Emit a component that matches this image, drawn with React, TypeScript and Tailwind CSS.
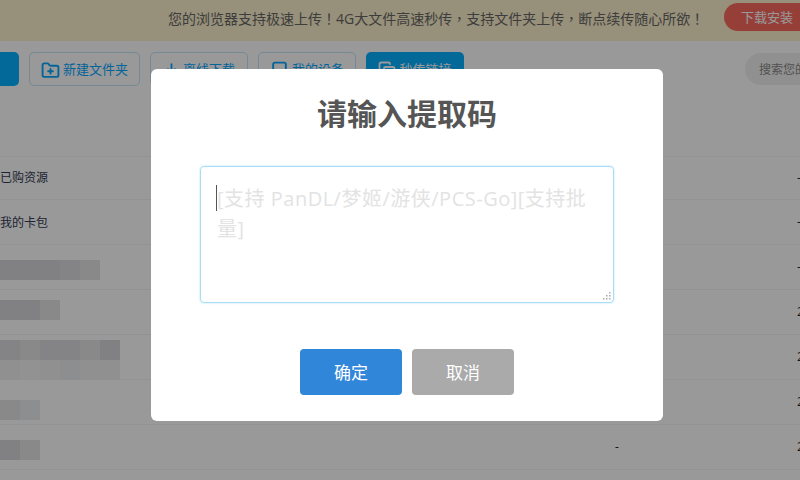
import type { ReactNode } from "react";
import { Download, Copy, Tablet, FolderPlus } from "lucide-react";

const font = "font-['Open_Sans','Noto_Sans_CJK_SC',sans-serif]";

const outline = "h-[34px] flex items-center justify-center gap-[3px] rounded-[5px] border border-[#c3e3f5] text-[13px] text-[#06a7ff]";

function P({ children }: { children: ReactNode }) {
  return <span className="font-['Noto_Sans_CJK_TC',sans-serif]">{children}</span>;
}

function Mosaic({ cells }: { cells: string[] }) {
  return (
    <div className="flex h-5">
      {cells.map((c, i) => (
        <div key={i} className="w-5 h-5" style={{ backgroundColor: c }} />
      ))}
    </div>
  );
}

function Row({ children, right, mid, h = "h-[45px]", pad = "" }: { children?: ReactNode; right: string; mid?: string; h?: string; pad?: string }) {
  return (
    <div className={`${h} shrink-0 border-b border-[#f4f4f8] flex items-center relative`}>
      <div className={`flex-1 min-w-0 text-xs text-[#333c55] ${pad}`}>{children}</div>
      {mid && <span className="absolute left-[615px] text-xs text-[#222]">{mid}</span>}
      <span className="absolute left-[797px] text-xs text-[#222]">{right}</span>
    </div>
  );
}

export default function App() {
  const a = "#d8d8da", b = "#dddddf", c = "#e5e5e7", d = "#ecedee", e = "#f0f0f1", f = "#f3f3f4";
  return (
    <div className={`relative w-[800px] h-[480px] overflow-hidden bg-white ${font}`}>
      <div className="h-[41px] bg-[#fcf0cb] flex items-start pl-[168px]">
        <span className="shrink-0 text-sm leading-[37px] text-[#666] whitespace-nowrap w-[556px]">
          您的浏览器支持极速上传<P>！</P>4G大文件高速秒传<P>，</P>支持文件夹上传<P>，</P>断点续传随心所欲<P>！</P>
        </span>
        <span className="shrink-0 mt-[3px] w-[96px] h-[28px] rounded-full bg-[#fa6a60] text-white text-[13px] leading-[28px] pl-[17px] whitespace-nowrap">下载安装</span>
      </div>
      <div className="h-[116px] border-b border-[#f4f4f8] flex items-start pt-[11px] gap-[10px] pl-[29px] relative">
        <div className="absolute left-0 top-[11px] w-[19px] h-[34px] rounded-r-[5px] bg-[#06b0ff]" />
        <div className={`${outline} w-[111px] pt-[2px]`}><FolderPlus size={19} strokeWidth={2.4} />新建文件夹</div>
        <div className={`${outline} w-[98px] pt-[2px]`}><Download size={17} strokeWidth={2.4} />离线下载</div>
        <div className={`${outline} w-[98px] pt-[2px]`}><Tablet size={19} strokeWidth={2.4} />我的设备</div>
        <div className="h-[34px] w-[98px] pt-[2px] flex items-center justify-center gap-[3px] rounded-[5px] bg-[#06b0ff] text-[13px] text-white"><Copy size={18} strokeWidth={2.4} />秒传链接</div>
        <div className="ml-auto mt-px w-[120px] mr-[-65px] h-[32px] rounded-full bg-[#f0f0f0] text-[12px] leading-[33px] pl-[14px] text-[#888] whitespace-nowrap">搜索您的文件</div>
      </div>
      <div className="flex flex-col">
        <Row right="-" h="h-[43px]">已购资源</Row>
        <Row right="-" pad="pt-[2px]">我的卡包</Row>
        <Row right="-" pad="self-start pt-[15px]"><Mosaic cells={[a, a, a, b, c]} /></Row>
        <Row right="2" pad="self-start pt-[10px]"><Mosaic cells={[a, a, c]} /></Row>
        <Row right="2" pad="self-start pt-[5px]">
          <Mosaic cells={[b, c, b, b, c, a]} />
          <Mosaic cells={[e, f, e, d, e, e]} />
        </Row>
        <Row right="2" pad="self-start pt-[20px]"><Mosaic cells={[c, d]} /></Row>
        <Row right="2" mid="-" pad="self-start pt-[15px]"><Mosaic cells={[a, c]} /></Row>
      </div>

      <div className="absolute inset-0 bg-black/40" />

      <div className="absolute left-[151px] top-[69px] w-[512px] h-[352px] rounded-[6px] bg-white flex flex-col items-center">
        <h1 className="mt-[22px] h-[45px] text-[30px] leading-[45px] font-bold text-[#555]">请输入提取码</h1>
        <div className="relative mt-[30px]">
          <textarea
            readOnly
            placeholder="[支持 PanDL/梦姬/游侠/PCS-Go][支持批量]"
            className="block w-[414px] h-[137px] rounded-[4px] border border-[#a9dcf5] shadow-[0_0_2px_#a9dcf5] pl-4 pr-4 pt-[17px] text-[20px] tracking-[0.5px] leading-[30px] caret-transparent outline-none resize-none placeholder:text-[#e3e3e3]"
          />
          <div className="absolute left-[16px] top-[19px] w-px h-[26px] bg-[#555]" />
          <svg className="absolute right-[3px] bottom-[3px]" width="8" height="8" viewBox="0 0 8 8" fill="#aaa">
            <rect x="6" y="0" width="1.5" height="1.5" />
            <rect x="3" y="3" width="1.5" height="1.5" />
            <rect x="6" y="3" width="1.5" height="1.5" />
            <rect x="0" y="6" width="1.5" height="1.5" />
            <rect x="3" y="6" width="1.5" height="1.5" />
            <rect x="6" y="6" width="1.5" height="1.5" />
          </svg>
        </div>
        <div className="mt-[46px] flex gap-[10px]">
          <button className="w-[102px] h-[46px] pt-px rounded-[4px] bg-[#3086d9] text-white text-[17px]">确定</button>
          <button className="w-[102px] h-[46px] pt-px rounded-[4px] bg-[#aaaaaa] text-white text-[17px]">取消</button>
        </div>
      </div>
    </div>
  );
}
